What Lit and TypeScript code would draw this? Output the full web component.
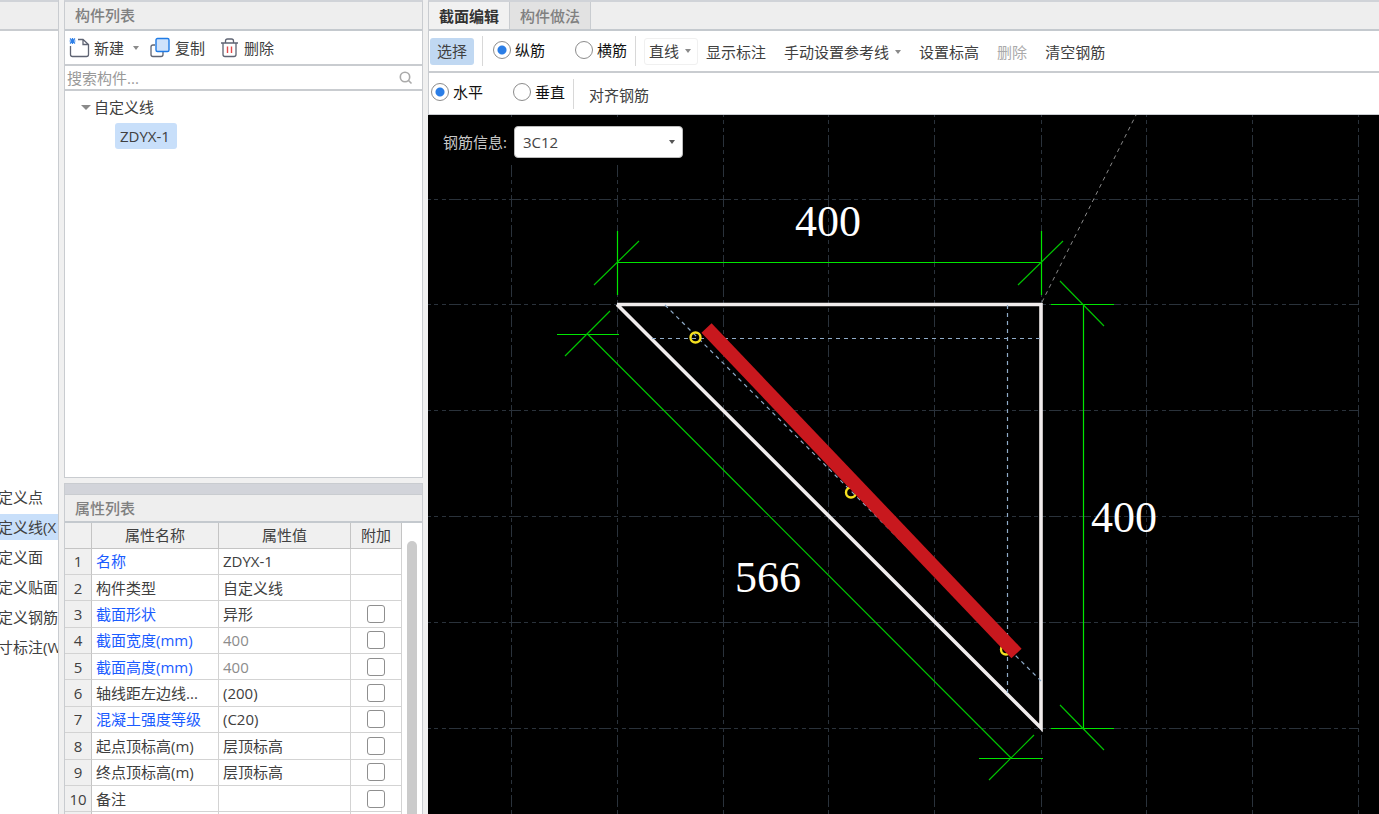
import { LitElement, html, css, svg } from "lit";
import { customElement, state } from "lit/decorators.js";
import { classMap } from "lit/directives/class-map.js";

const shared = css`
  * {
    box-sizing: border-box;
  }
  button,
  input,
  select {
    font: inherit;
    color: inherit;
    margin: 0;
  }
  button {
    display: inline-flex;
    align-items: center;
    border: 0;
    padding: 0;
    background: none;
    white-space: nowrap;
  }
  .caret {
    width: 0;
    height: 0;
    border: 3px solid transparent;
    border-top: 4px solid #8a8a8a;
    border-bottom: 0;
  }
`;

interface PropertyRow {
  name: string;
  value: string;
  key?: boolean;
  muted?: boolean;
  extra?: boolean;
}

const PROPERTIES: PropertyRow[] = [
  { name: "名称", value: "ZDYX-1", key: true },
  { name: "构件类型", value: "自定义线" },
  { name: "截面形状", value: "异形", key: true, extra: true },
  { name: "截面宽度(mm)", value: "400", key: true, muted: true, extra: true },
  { name: "截面高度(mm)", value: "400", key: true, muted: true, extra: true },
  { name: "轴线距左边线...", value: "(200)", extra: true },
  { name: "混凝土强度等级", value: "(C20)", key: true, extra: true },
  { name: "起点顶标高(m)", value: "层顶标高", extra: true },
  { name: "终点顶标高(m)", value: "层顶标高", extra: true },
  { name: "备注", value: "", extra: true },
];

@customElement("type-nav")
export class TypeNav extends LitElement {
  static styles = [
    shared,
    css`
      :host {
        display: flex;
        flex-direction: column;
        border-right: 1px solid #c9ccd0;
        background: #fff;
      }
      .head {
        flex: none;
        height: 31px;
        background: #eee;
        border-top: 2px solid #d0d3d8;
        border-bottom: 2px solid #c9ccd0;
      }
      .body {
        flex: 1;
        min-height: 0;
        overflow: hidden;
        display: flex;
        flex-direction: column;
      }
      .lead {
        flex: 453;
      }
      .items {
        flex: none;
        display: grid;
        gap: 4px;
        margin-left: -2px;
      }
      .tail {
        flex: 154;
      }
      .item {
        height: 26px;
        line-height: 26px;
      }
      .on {
        background: #c8dffa;
      }
    `,
  ];
  render() {
    const items = ["定义点", "定义线(X", "定义面", "定义贴面", "定义钢筋", "寸标注(W"];
    return html`
      <div class="head"></div>
      <div class="body">
        <div class="lead"></div>
        <div class="items">
          ${items.map((t, i) => html`<button class=${classMap({ item: true, on: i === 1 })}>${t}</button>`)}
        </div>
        <div class="tail"></div>
      </div>
    `;
  }
}

@customElement("component-list")
export class ComponentList extends LitElement {
  static styles = [
    shared,
    css`
      :host {
        display: flex;
        flex-direction: column;
        border: 1px solid #c9ccd0;
        border-top: 2px solid #d0d3d8;
        background: #fff;
      }
      .title {
        flex: none;
        height: 29px;
        padding-left: 10px;
        line-height: 27px;
        font-weight: 500;
        color: #808080;
        background: #eee;
        border-bottom: 2px solid #c4c9ce;
      }
      .tools {
        flex: none;
        display: flex;
        align-items: center;
        height: 35px;
        padding-left: 4px;
        border-bottom: 2px solid #c9ccd0;
      }
      .tools svg {
        margin-right: 4px;
      }
      .tools .caret {
        margin: 0 10px 0 9px;
      }
      .tools .gap {
        margin-left: 15px;
      }
      .search {
        flex: none;
        display: flex;
        align-items: center;
        height: 25px;
        padding: 0 9px 0 2px;
        border-bottom: 2px solid #c9ccd0;
      }
      .search input {
        flex: 1;
        min-width: 0;
        height: 21px;
        border: 0;
        padding: 0;
        outline: 0;
        background: none;
      }
      .search input::placeholder {
        color: #999;
        opacity: 1;
      }
      .tree {
        flex: 1;
        min-height: 0;
        padding: 3px 0 0 16px;
      }
      .node {
        display: flex;
        align-items: center;
        height: 26px;
        gap: 3px;
      }
      .node .caret {
        border-width: 5px 5px 0;
      }
      .leaf {
        height: 26px;
        margin: 3px 0 0 34px;
        padding: 0 7px 0 5px;
        border-radius: 3px;
        background: #c8dffa;
      }
    `,
  ];
  render() {
    return html`
      <div class="title">构件列表</div>
      <div class="tools">
        <button>
          <svg width="21" height="22" viewBox="0 0 21 22" fill="none">
            <path d="M1.500 9v8.500q0 2 2 2h14q2 0 2-2V7.500L14 2.500H9M14 2.500v5h5.500" stroke="#5f6473" stroke-width="1.300" />
            <path d="M1 1.500l5 5M6 1.500l-5 5M3.500 1v6M.5 4h6" stroke="#2f80e8" stroke-width="1.200" />
          </svg>
          新建
        </button>
        <span class="caret"></span>
        <button>
          <svg width="22" height="22" viewBox="0 0 22 22" fill="none">
            <path d="M6 8H4q-2 0-2 2v7.500q0 2 2 2h8q2 0 2-2v-3" stroke="#5f6473" stroke-width="1.300" />
            <rect x="7" y="1.500" width="13" height="13" rx="1.500" fill="#cfe2fb" stroke="#1f7be6" stroke-width="1.400" />
          </svg>
          复制
        </button>
        <button class="gap">
          <svg width="20" height="22" viewBox="0 0 20 22" fill="none">
            <path d="M1 6h17M5.500 6V4q0-2 2-2h4q2 0 2 2v2M3 6v11.500q0 2 2 2h9q2 0 2-2V6" stroke="#5f6473" stroke-width="1.300" />
            <path d="M7.500 9.500v6.500M11.500 9.500v6.500" stroke="#e34a4a" stroke-width="1.400" />
          </svg>
          删除
        </button>
      </div>
      <label class="search">
        <input type="text" placeholder="搜索构件..." aria-label="搜索构件" />
        <svg width="14" height="14" viewBox="0 0 14 14" fill="none" stroke="#aaa" stroke-width="1.600">
          <circle cx="6" cy="6" r="4.700" />
          <path d="M9.500 9.500l3 3" />
        </svg>
      </label>
      <div class="tree">
        <div class="node"><span class="caret"></span>自定义线</div>
        <button class="leaf">ZDYX-1</button>
      </div>
    `;
  }
}

@customElement("property-list")
export class PropertyList extends LitElement {
  static styles = [
    shared,
    css`
      :host {
        display: flex;
        flex-direction: column;
        overflow: hidden;
        border: 1px solid #c9ccd0;
        border-bottom: 0;
        background: #fff;
      }
      .bar {
        flex: none;
        height: 11px;
        background: #d2d4da;
        border-bottom: 1px solid #c9ccd0;
      }
      .title {
        flex: none;
        height: 28px;
        padding-left: 10px;
        line-height: 27px;
        font-weight: 500;
        color: #808080;
        background: #eee;
        border-bottom: 2px solid #c4c9ce;
      }
      .scroller {
        flex: 1;
        min-height: 0;
        display: flex;
        overflow: hidden;
      }
      table {
        flex: 1;
        min-width: 0;
        height: 316px;
        border-collapse: separate;
        border-spacing: 0;
        table-layout: fixed;
      }
      th,
      td {
        height: 26px;
        padding: 0 4px;
        font-weight: 400;
        line-height: 20px;
        text-align: left;
        white-space: nowrap;
        overflow: hidden;
        border-right: 1px solid #d3d3d3;
        border-bottom: 1px solid #d3d3d3;
      }
      thead th {
        text-align: center;
        background: #f0f0f0;
        border-color: #c4c4c4;
      }
      tbody th {
        padding: 0;
        text-align: center;
        background: #f0f0f0;
        border-right-color: #c4c4c4;
      }
      .num {
        width: 27px;
      }
      .name {
        width: 127px;
      }
      .extra {
        width: 51px;
      }
      .key {
        color: #1a5cff;
      }
      .muted {
        color: #8c8c8c;
      }
      .tick {
        padding: 0;
        text-align: center;
      }
      .tick input {
        appearance: none;
        display: block;
        width: 18px;
        height: 18px;
        margin: 0 auto;
        border: 1px solid #8f8f8f;
        border-radius: 3px;
        background: #fff;
      }
      .tick input:checked {
        background: #2f80e8;
      }
      .track {
        flex: none;
        width: 20px;
        padding: 18px 5px 0;
      }
      .thumb {
        height: 100%;
        border-radius: 5px 5px 0 0;
        background: #cbcbcb;
      }
    `,
  ];
  render() {
    return html`
      <div class="bar"></div>
      <div class="title">属性列表</div>
      <div class="scroller">
        <table>
          <thead>
            <tr>
              <th class="num"></th>
              <th class="name">属性名称</th>
              <th>属性值</th>
              <th class="extra">附加</th>
            </tr>
          </thead>
          <tbody>
            ${PROPERTIES.map(
              (p, i) => html`<tr>
                <th>${i + 1}</th>
                <td class=${classMap({ key: !!p.key })}>${p.name}</td>
                <td class=${classMap({ muted: !!p.muted })}>${p.value}</td>
                <td class="tick">
                  ${p.extra ? html`<input type="checkbox" aria-label=${"附加 " + p.name} />` : ""}
                </td>
              </tr>`
            )}
            <tr>
              <th></th>
              <td></td>
              <td></td>
              <td></td>
            </tr>
          </tbody>
        </table>
        <div class="track"><div class="thumb"></div></div>
      </div>
    `;
  }
}

@customElement("section-canvas")
export class SectionCanvas extends LitElement {
  static styles = [
    shared,
    css`
      :host {
        display: block;
        position: relative;
        overflow: hidden;
        background: #000;
      }
      .drawing {
        display: block;
        width: 100%;
        height: 100%;
      }
      .grid {
        stroke: #2a323b;
        stroke-width: 1;
      }
      .gx {
        stroke-dasharray: 12 3 4 4 4 3;
        stroke-dashoffset: 9;
      }
      .gy {
        stroke-dasharray: 12 3 4 4 4 3;
        stroke-dashoffset: 10;
      }
      .dim {
        stroke: #00e600;
        stroke-width: 1.2;
        fill: none;
      }
      .slant {
        stroke: #00c400;
      }
      .cover {
        stroke: #8fabc8;
        stroke-width: 1.2;
        stroke-dasharray: 4 4;
        fill: none;
      }
      .leader {
        stroke: #8a8a8a;
        stroke-width: 1;
        stroke-dasharray: 4 4;
      }
      .outline {
        stroke: #f0ecec;
        stroke-width: 3.6;
        fill: none;
      }
      .rebar {
        fill: none;
        stroke: #f5e020;
        stroke-width: 2.4;
      }
      .arrow {
        stroke: #c8181e;
        stroke-width: 14;
      }
      .value {
        fill: #fff;
        font-family: "Liberation Serif", serif;
        font-size: 44px;
      }
      .info {
        position: absolute;
        left: 6px;
        top: 4px;
        display: flex;
        align-items: center;
        gap: 7px;
        height: 46px;
        padding: 0 6px 0 9px;
        background: #000;
        color: #c8c8c8;
      }
      .pick {
        position: relative;
        display: flex;
        align-items: center;
      }
      select {
        appearance: none;
        width: 169px;
        height: 32px;
        padding: 0 24px 0 8px;
        border: 1px solid #bbb;
        border-radius: 4px;
        background: #fff;
        color: #444;
      }
      .pick .caret {
        position: absolute;
        right: 8px;
        border-top-color: #555;
        pointer-events: none;
      }
    `,
  ];
  render() {
    const cols = [511, 617, 723, 828, 934, 1041, 1146, 1252, 1358];
    const rows = [199, 304, 410, 516, 622, 728];
    return html`
      <svg class="drawing" viewBox="428 115 951 699" preserveAspectRatio="xMinYMin slice">
        ${rows.map((y) => svg`<line class="grid gx" x1="428" x2="1359" y1=${y + 0.5} y2=${y + 0.5} />`)}
        ${cols.map((x) => svg`<line class="grid gy" x1=${x + 0.5} x2=${x + 0.5} y1="115" y2="814" />`)}
        <path class="leader" d="M1042 302L1136 115" />
        <path class="outline" d="M617 304.500H1041V728L617 304.500" />
        <path class="cover" d="M652 338.500H1041M1007.500 305V695M665 305L1041 681" />
        <circle class="rebar" cx="695.500" cy="337.500" r="5" />
        <circle class="rebar" cx="851" cy="492.500" r="5" />
        <circle class="rebar" cx="1006" cy="649.500" r="5" />
        <path class="arrow" d="M706.500 328L1016.500 653.500" />
        <path class="dim" d="M617.500 231V295M1041.500 231V295M617 262.500H1041" />
        <path class="dim" d="M1051 304.500H1114M1051 728.500H1114M1083.500 304V728" />
        <path class="dim" d="M557 334.500H619M979 758.500H1043" />
        <path
          class="dim slant"
          d="M594 285L639 241M1018 285L1063 241M1060 281L1104 326M1060 705L1104 750M565 356L610 311M989 780L1034 735M588 334.500L1011 758"
        />
        <text class="value" x="795" y="236">400</text>
        <text class="value" x="1091" y="532">400</text>
        <text class="value" x="735" y="592">566</text>
      </svg>
      <div class="info">
        <label for="bar">钢筋信息:</label>
        <span class="pick">
          <select id="bar">
            <option>3C12</option>
          </select>
          <span class="caret"></span>
        </span>
      </div>
    `;
  }
}

@customElement("section-editor")
export class SectionEditor extends LitElement {
  @state() private kind = "纵筋";
  @state() private axis = "水平";

  static styles = [
    shared,
    css`
      :host {
        display: flex;
        flex-direction: column;
        border-left: 1px solid #c9ccd0;
        border-top: 2px solid #d0d3d8;
        background: #fff;
      }
      .tabs {
        flex: none;
        display: flex;
        height: 29px;
        background: #eee;
        border-bottom: 2px solid #c4c9ce;
      }
      .tab {
        padding: 0 10px;
        color: #808080;
        font-weight: 500;
        background: #e2e2e2;
        border-right: 1px solid #c9ccd0;
      }
      .active {
        color: #333;
        font-weight: 700;
        background: #f1f1f1;
      }
      .tools {
        flex: none;
        display: flex;
        align-items: center;
        height: 42px;
        border-bottom: 2px solid #c9ccd0;
        white-space: nowrap;
      }
      .tools button {
        margin-top: 2px;
      }
      .sep {
        width: 1px;
        height: 30px;
        background: #d8d8d8;
      }
      .tools .chip {
        height: 27px;
        margin: 0 8px 0 1px;
        padding: 0 7px;
        border-radius: 3px;
        background: #c0d8f2;
      }
      .radio {
        display: inline-flex;
        align-items: center;
        gap: 4px;
        padding-bottom: 3px;
        color: #111;
      }
      .radio input {
        appearance: none;
        width: 18px;
        height: 18px;
        border: 1px solid #8c8c8c;
        border-radius: 50%;
        background: #fff;
      }
      .radio input:checked {
        background: radial-gradient(#2a7de6 0 4px, #fff 5px);
      }
      .pair {
        display: flex;
        gap: 30px;
        margin: 0 8px 0 10px;
      }
      .second {
        height: 42px;
        border-bottom-width: 1px;
      }
      .second .pair {
        margin-left: 2px;
      }
      .tools .line {
        height: 27px;
        margin: 0 8px;
        padding: 0 6px 0 4px;
        border: 1px solid #f0f0f0;
        border-radius: 3px;
        gap: 6px;
      }
      .menu {
        display: flex;
        gap: 18px;
      }
      .menu button {
        gap: 6px;
      }
      .off {
        color: #aaa;
      }
      .align {
        margin-left: 15px;
      }
      section-canvas {
        flex: 1;
        min-height: 0;
        margin-left: -1px;
      }
    `,
  ];

  private radios(group: string, names: string[], current: string, pick: (v: string) => void) {
    return html`<div class="pair">
      ${names.map(
        (n) => html`<label class="radio"
          ><input type="radio" name=${group} .checked=${n === current} @change=${() => pick(n)} />${n}</label
        >`
      )}
    </div>`;
  }

  render() {
    return html`
      <div class="tabs">
        <button class="tab active">截面编辑</button>
        <button class="tab">构件做法</button>
      </div>
      <div class="tools">
        <button class="chip">选择</button>
        <span class="sep"></span>
        ${this.radios("kind", ["纵筋", "横筋"], this.kind, (v) => (this.kind = v))}
        <span class="sep"></span>
        <button class="line">直线<span class="caret"></span></button>
        <div class="menu">
          <button>显示标注</button>
          <button>手动设置参考线<span class="caret"></span></button>
          <button>设置标高</button>
          <button class="off" disabled>删除</button>
          <button>清空钢筋</button>
        </div>
      </div>
      <div class="tools second">
        ${this.radios("axis", ["水平", "垂直"], this.axis, (v) => (this.axis = v))}
        <span class="sep"></span>
        <button class="align">对齐钢筋</button>
      </div>
      <section-canvas></section-canvas>
    `;
  }
}

@customElement("app-root")
export class AppRoot extends LitElement {
  static styles = css`
    :host {
      display: grid;
      grid-template-columns: 59px 359px minmax(0, 1fr);
      column-gap: 5px;
      height: 100vh;
      overflow: hidden;
      background: #f0f0f0;
      color: #404040;
      font: 15px/20px "Open Sans", "Noto Sans CJK SC", sans-serif;
    }
    .middle {
      display: flex;
      flex-direction: column;
      gap: 5px;
      min-height: 0;
    }
    component-list {
      flex: 477 1 0;
      min-height: 0;
    }
    property-list {
      flex: 332 1 0;
      min-height: 0;
    }
  `;
  render() {
    return html`
      <type-nav></type-nav>
      <div class="middle">
        <component-list></component-list>
        <property-list></property-list>
      </div>
      <section-editor></section-editor>
    `;
  }
}
